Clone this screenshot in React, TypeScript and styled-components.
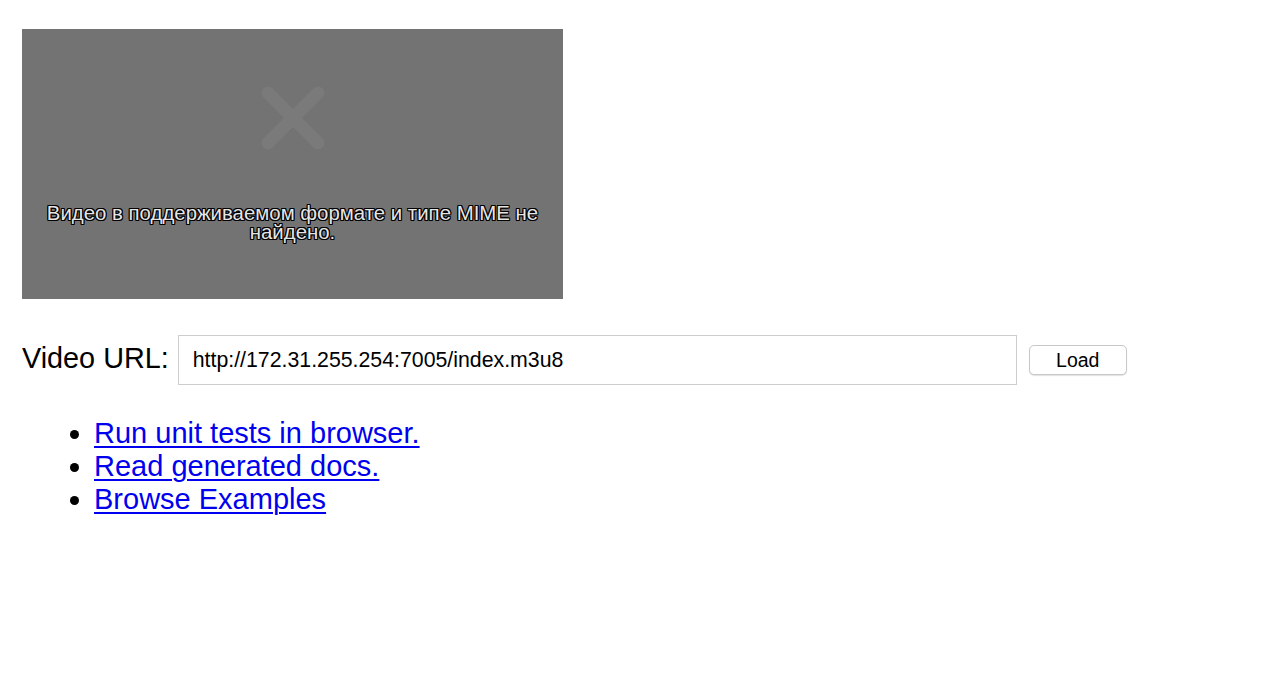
import React from "react";
import styled, { createGlobalStyle } from "styled-components";

const Global = createGlobalStyle`
  html, body { margin: 0; padding: 0; background: #fff; }
  body { font-family: "Liberation Sans", Arial, Helvetica, sans-serif; color: #000; }
`;

const Page = styled.main`
  padding: 29px 22px;
  display: flex;
  flex-direction: column;
  align-items: flex-start;
`;

const VideoBox = styled.div`
  width: 541px;
  height: 270px;
  background: #737373;
  display: flex;
  flex-direction: column;
  align-items: center;
  box-sizing: border-box;
  padding-top: 56px;
`;

const ErrorIcon = styled.svg`
  width: 66px;
  height: 66px;
  display: block;
`;

const ErrorText = styled.p`
  margin: 53px 0 0;
  width: 500px;
  text-align: center;
  font-size: 20.4px;
  line-height: 19px;
  color: #e6e6e6;
  letter-spacing: 0;
  text-shadow:
    -1px -1px 0 #000, 1px -1px 0 #000, -1px 1px 0 #000, 1px 1px 0 #000,
    0 -1px 0 #000, 0 1px 0 #000, -1px 0 0 #000, 1px 0 0 #000;
`;

const UrlRow = styled.div`
  margin-top: 36px;
  display: flex;
  align-items: center;
`;

const Label = styled.label`
  font-size: 28.8px;
  line-height: 32px;
  margin-right: 9px;
  margin-top: -4px;
`;

const UrlInput = styled.input`
  width: 839px;
  height: 50px;
  box-sizing: border-box;
  border: 1px solid #cdcdcd;
  padding: 0 0 0 14px;
  font-family: "Liberation Sans", Arial, sans-serif;
  font-size: 21.3px;
  color: #000;
  outline: none;
`;

const LoadButton = styled.button`
  margin-left: 12px;
  width: 98px;
  height: 30px;
  border: 1px solid #c8c8c8;
  border-radius: 5px;
  background: #fff;
  box-shadow: 0 1px 1px rgba(0, 0, 0, 0.12);
  font-family: "Liberation Sans", Arial, sans-serif;
  font-size: 19.5px;
  color: #000;
  padding: 0;
`;

const Links = styled.ul`
  margin: 32px 0 0;
  padding-left: 72px;
  font-size: 29px;
  line-height: 33px;
`;

const Item = styled.li`
  list-style: disc;
`;

const Link = styled.a`
  color: #0000ee;
  text-decoration: underline;
  text-decoration-thickness: 2px;
  text-underline-offset: 3px;
`;

export default function App() {
  return (
    <>
      <Global />
      <Page>
        <VideoBox>
          <ErrorIcon viewBox="0 0 66 66">
            <path
              d="M8 8 L58 58 M58 8 L8 58"
              stroke="#7a7a7a"
              strokeWidth="13"
              strokeLinecap="round"
              fill="none"
            />
          </ErrorIcon>
          <ErrorText>Видео в поддерживаемом формате и типе MIME не найдено.</ErrorText>
        </VideoBox>
        <UrlRow>
          <Label htmlFor="url">Video URL:</Label>
          <UrlInput id="url" defaultValue="http://172.31.255.254:7005/index.m3u8" />
          <LoadButton>Load</LoadButton>
        </UrlRow>
        <Links>
          <Item><Link href="#">Run unit tests in browser.</Link></Item>
          <Item><Link href="#">Read generated docs.</Link></Item>
          <Item><Link href="#">Browse Examples</Link></Item>
        </Links>
      </Page>
    </>
  );
}
